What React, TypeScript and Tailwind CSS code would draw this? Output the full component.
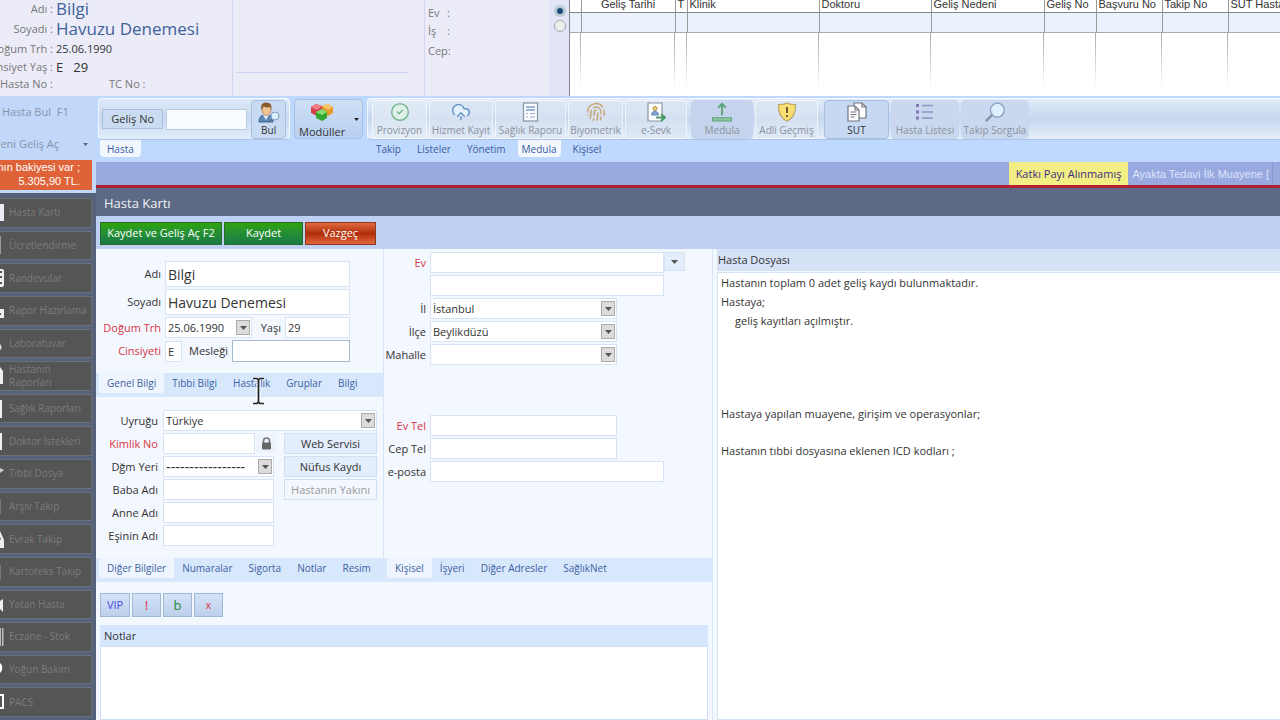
import React from "react";
import {
  CircleCheck,
  CloudUpload,
  Fingerprint,
} from "lucide-react";

const inputBase =
  "block border border-[#d5e3f3] bg-white px-[2px] leading-4 text-[#333] outline-none";

function Label({ id, text, red }: { id: string; text: string; red?: boolean }) {
  return (
    <label
      htmlFor={id}
      className={
        "whitespace-nowrap text-right text-[11px] leading-4 " +
        (red ? "text-[#d93644]" : "text-[#333]")
      }
    >
      {text}
    </label>
  );
}

function Combo({
  id,
  value,
  className,
  font = "text-[11px]",
}: {
  id: string;
  value: string;
  className: string;
  font?: string;
}) {
  return (
    <div className={"relative " + className}>
      <select id={id} className={inputBase + " h-[21px] w-full appearance-none " + font}>
        <option>{value}</option>
      </select>
      <span className="pointer-events-none absolute right-[2px] top-[3px] flex h-[15px] w-[14px] items-center justify-center border border-[#aaa] bg-[#dcdcdc]">
        <Arrow />
      </span>
    </div>
  );
}

function Arrow() {
  return (
    <svg width="7" height="4" viewBox="0 0 7 4">
      <path d="M0 0h7L3.5 4z" fill="#555" />
    </svg>
  );
}

function UserIcon() {
  return (
    <svg width="22" height="21" viewBox="0 0 22 21">
      <path d="M1 20c0-6 3-7 7-7s7 1 7 7z" fill="#5a87b8" stroke="#3f658f" />
      <path d="M5 13l3 5 3-5z" fill="#e8eef5" />
      <ellipse cx="8.500" cy="7.500" rx="4.500" ry="6" fill="#efc393" stroke="#a8763f" strokeWidth=".7" />
      <path d="M3.500 8C2 1.500 6 0 9 .7c4 0 5 3.300 4.300 7L12 5C9 6 7 5 5.500 4.500z" fill="#8a5a2b" />
      <path d="M14 17l-3 3" stroke="#5a6f88" strokeWidth="1.500" />
      <circle cx="17" cy="14" r="4" fill="#dcefff" stroke="#7f9fc0" />
    </svg>
  );
}

function CubesIcon() {
  return (
    <svg width="24" height="19" viewBox="0 0 24 19">
      <path d="M1 4l5-3 6 2v6l-5 4-6-3z" fill="#d4404a" />
      <path d="M1 4l5-3 6 2-5 4z" fill="#f07f86" />
      <path d="M12 3l6-2 5 3v6l-5 3-6-4z" fill="#e89a2c" />
      <path d="M12 3l6-2 5 3-5 3z" fill="#f8c56a" />
      <path d="M6 9l6-3 5 3v6l-5 3-6-3z" fill="#35a833" />
      <path d="M6 9l6-3 5 3-5 3z" fill="#86db72" />
    </svg>
  );
}

function ReportIcon() {
  return (
    <svg width="18" height="20" viewBox="0 0 18 20" fill="none">
      <rect x="1.500" y="1" width="14" height="18" fill="#fbfcff" stroke="#8d99a8" strokeWidth="1.300" />
      <path d="M4 5h9M4 8h9" stroke="#7d9bd0" strokeWidth="1.500" />
      <path d="M4 11.500h2M8 11.500h5M4 15h2M8 15h5" stroke="#9aaed2" strokeWidth="1.200" />
    </svg>
  );
}

function ReferralIcon() {
  return (
    <svg width="20" height="20" viewBox="0 0 20 20" fill="none">
      <path d="M2 1h14v18H2z" fill="#fff" stroke="#8b929b" strokeWidth="1.200" />
      <circle cx="9" cy="6.500" r="2" fill="#f1d477" stroke="#a9893e" />
      <path d="M5.500 13c0-5 7-5 7 0z" fill="#82a5d8" stroke="#6386bd" />
      <path d="M10 15.500h8M15 12l4 3.500-4 3.500" stroke="#4a9b6a" strokeWidth="2" />
    </svg>
  );
}

function UploadIcon() {
  return (
    <svg width="22" height="21" viewBox="0 0 22 21" fill="none">
      <path d="M11 14V2M7 6l4-4 4 4" stroke="#5ba57b" strokeWidth="2" />
      <rect x="1" y="16.500" width="20" height="3.500" fill="#8cc6a0" stroke="#5ba57b" />
    </svg>
  );
}

function ShieldIcon() {
  return (
    <svg width="20" height="20" viewBox="0 0 20 20" fill="none">
      <path d="M10 1c3 1.800 5.500 1.500 8.500 1.500C19 10 17 15.500 10 19.300 3 15.500 1 10 1.500 2.500 4.500 2.500 7 2.800 10 1z" fill="#f9df72" stroke="#b6a468" strokeWidth="1.200" />
      <path d="M10 5v6M10 13v2" stroke="#6b5a35" strokeWidth="2" />
    </svg>
  );
}

function DocsIcon() {
  return (
    <svg width="22" height="20" viewBox="0 0 22 20" fill="none" stroke="#70757d" strokeWidth="1.200">
      <path d="M8 1h8l4 4v11H8z" fill="#fff" />
      <path d="M16 1v4h4" />
      <path d="M2 4h7l4 4v11H2z" fill="#fff" />
      <path d="M9 4v4h4M4.500 10h6M4.500 12.500h6M4.500 15h4" />
    </svg>
  );
}

function ListIcon() {
  return (
    <svg width="20" height="20" viewBox="0 0 20 20" fill="none">
      <path d="M7 3.500h11M7 10h11M7 16h11" stroke="#8b98c5" strokeWidth="1.600" />
      <path d="M1 3.500h3M1 10h3M1 16h3" stroke="#8578b4" strokeWidth="3" />
    </svg>
  );
}

function MagnifierIcon() {
  return (
    <svg width="22" height="21" viewBox="0 0 22 21" fill="none">
      <path d="M8 13.500L1.500 20" stroke="#8592a5" strokeWidth="2.600" />
      <circle cx="13.500" cy="8.500" r="7.300" fill="#dcf0fd" stroke="#8ba3c4" strokeWidth="1.400" />
    </svg>
  );
}

const tools: {
  label: string;
  icon: React.ReactNode;
  box: string;
  look: string;
}[] = [
  { label: "Provizyon", icon: <CircleCheck size={22} strokeWidth={1.8} color="#79b894" fill="#dff0e6" />, box: "w-[55px]", look: "bg-[#e3ebf5]/70 border-white/60 text-[#8b929c]" },
  { label: "Hizmet Kayıt", icon: <CloudUpload size={22} strokeWidth={1.8} color="#6795c8" fill="#e4f1fc" />, box: "w-[64px]", look: "bg-[#dbe5f4]/70 border-white/60 text-[#8b929c]" },
  { label: "Sağlık Raporu", icon: <ReportIcon />, box: "w-[71px]", look: "bg-[#dbe5f4]/70 border-white/60 text-[#8b929c]" },
  { label: "Biyometrik", icon: <Fingerprint size={22} strokeWidth={1.8} color="#c9a878" />, box: "w-[55px]", look: "bg-[#dbe5f4]/70 border-white/60 text-[#8b929c]" },
  { label: "e-Sevk", icon: <ReferralIcon />, box: "w-[62px] mr-[2px]", look: "bg-[#dbe5f4]/70 border-white/60 text-[#8b929c]" },
  { label: "Medula", icon: <UploadIcon />, box: "w-[62px]", look: "bg-[#c5d4ec] border-[#c5d4ec] text-[#8b929c]" },
  { label: "Adli Geçmiş", icon: <ShieldIcon />, box: "w-[63px] mr-1", look: "bg-[#dbe5f4]/70 border-white/60 text-[#8b929c]" },
  { label: "SUT", icon: <DocsIcon />, box: "w-[65px]", look: "bg-[#c6d8f2] border-[#a5bfe2] text-[#333]" },
  { label: "Hasta Listesi", icon: <ListIcon />, box: "w-[68px]", look: "bg-[#c9d8ee] border-[#c9d8ee] text-[#8b929c]" },
  { label: "Takip Sorgula", icon: <MagnifierIcon />, box: "w-[68px]", look: "bg-[#c9d8ee] border-[#c9d8ee] text-[#8b929c]" },
];

const ribbonTabs = ["Takip", "Listeler", "Yönetim", "Medula", "Kişisel"];

const menu: { label: string; icon: React.ReactNode }[] = [
  { label: "Hasta Kartı", icon: <path d="M0 0h4v17H0z" fill="#e9ebf5" /> },
  { label: "Ücretlendirme", icon: <path d="M0 0h1v18H0z" fill="#999" /> },
  { label: "Randevular", icon: <path d="M0 0h2a2 2 0 0 1 2 2v14a2 2 0 0 1-2 2H0v-3h2v-2H0V9h2V7H0V4h2V2H0z" fill="#eee" /> },
  { label: "Rapor Hazırlama", icon: <path d="M0 7h4v9H0v-3h1v-2H0z" fill="#eee" /> },
  { label: "Laboratuvar", icon: <path d="M0 10c2 2 2 5 0 6z" fill="#ddd" /> },
  { label: "Hastanın Raporları", icon: <path d="M0 0l3 4v13H0z" fill="#eee" /> },
  { label: "Sağlık Raporları", icon: <path d="M0 0h2v18H0z" fill="#eee" /> },
  { label: "Doktor İstekleri", icon: <path d="M0 1h2v17H0z" fill="#eee" /> },
  { label: "Tıbbi Dosya", icon: <path d="M0 3l4 2-4 3z" fill="#ccc" /> },
  { label: "Arşiv Takip", icon: <path d="M0 2h1v15H0z" fill="#777" /> },
  { label: "Evrak Takip", icon: <path d="M0 1l4 9v8H0v-8l1-1-1-2z" fill="#eee" /> },
  { label: "Kartoteks Takip", icon: <path d="M0 2h1v15H0z" fill="#777" /> },
  { label: "Yatan Hasta", icon: <path d="M0 6l3-2v13l-3-3z" fill="#eee" /> },
  { label: "Eczane - Stok", icon: <path d="M0 0h1v18H0zM2 0h1.500v18H2z" fill="#bbb" /> },
  { label: "Yoğun Bakım", icon: <path d="M0 2c3 2 3 7 0 10z" fill="#fff" /> },
  { label: "PACS", icon: <path d="M0 1h4v15H0v-2h2V3H0z" fill="#fff" /> },
];

const columns = [
  { label: "", w: "w-[11px]" },
  { label: "Geliş Tarihi", w: "w-[94px]" },
  { label: "T", w: "w-[12px]" },
  { label: "Klinik", w: "w-[132px]" },
  { label: "Doktoru", w: "w-[112px]" },
  { label: "Geliş Nedeni", w: "w-[113px]" },
  { label: "Geliş No", w: "w-[52px]" },
  { label: "Başvuru No", w: "w-[66px]" },
  { label: "Takip No", w: "w-[66px]" },
  { label: "SUT Hasta", w: "" },
];

function Header() {
  return (
    <header className="flex h-24 shrink-0 overflow-hidden bg-[#ebecf8]">
      <dl className="grid w-[233px] shrink-0 grid-cols-[53px_1fr] grid-rows-[18px_22px_19px_17px_17px] items-center gap-x-[3px] border-r border-[#d3d6ee] text-[11px] text-[#777]">
        <dt className="flex justify-end whitespace-nowrap">Adı :</dt>
        <dd className="text-[17px] leading-4 text-[#3f629b]">Bilgi</dd>
        <dt className="flex justify-end whitespace-nowrap">Soyadı :</dt>
        <dd className="whitespace-nowrap text-[17px] leading-5 text-[#3f629b]">Havuzu Denemesi</dd>
        <dt className="flex justify-end whitespace-nowrap">Doğum Trh :</dt>
        <dd className="text-[11px] text-[#333]">25.06.1990</dd>
        <dt className="flex justify-end whitespace-nowrap">Cinsiyet Yaş :</dt>
        <dd className="flex gap-[10px] text-[13px] text-[#333]">
          <span>E</span>
          <span>29</span>
        </dd>
        <dt className="flex justify-end whitespace-nowrap">Hasta No :</dt>
        <dd className="pl-[53px]">TC No :</dd>
      </dl>
      <div className="w-[192px] shrink-0 border-r border-[#d3d6ee] pl-1 pr-[15px]">
        <div className="h-[73px] border-b border-[#cdd0f0]" />
      </div>
      <div className="flex w-[145px] shrink-0 justify-between border-r border-[#888]">
        <div className="grid content-start gap-y-[2px] pl-[3px] pt-[5px] text-[11px] leading-4 text-[#777]">
          <p className="grid grid-cols-[19px_1fr]"><span>Ev</span><span>:</span></p>
          <p className="grid grid-cols-[19px_1fr]"><span>İş</span><span>:</span></p>
          <p className="pt-[2px]">Cep:</p>
        </div>
        <div className="flex w-[19px] flex-col items-center gap-[3px] bg-[#e2e4f7] pt-[5px]">
          <input type="radio" name="phone" aria-label="Ev telefonu" defaultChecked className="size-3 appearance-none rounded-full border border-[#999] bg-white checked:border-[3px] checked:border-[#b9cbd8] checked:bg-[#1f4d77]" />
          <input type="radio" name="phone" aria-label="İş telefonu" className="size-3 appearance-none rounded-full border border-[#aaa] bg-[#eee] checked:border-[3px] checked:border-[#b9cbd8] checked:bg-[#1f4d77]" />
        </div>
      </div>
      <div className="flex min-w-0 flex-1 items-end overflow-hidden bg-white pb-2">
        <table className="w-full table-fixed border-collapse font-['Liberation_Sans',sans-serif] text-[11px] leading-3 text-[#333]">
          <thead>
            <tr className="h-5 border-b border-[#888]">
              {columns.map((c, i) => (
                <th key={c.label} className={c.w + " overflow-hidden whitespace-nowrap border-r border-[#999] px-[2px] pt-[3px] font-normal last:border-r-0 " + (i === 1 ? "text-center" : "text-left")}>
                  {c.label}
                </th>
              ))}
            </tr>
          </thead>
          <tbody>
            <tr className="h-5 border-b border-[#aaa] bg-[#ebf2fd]">
              {columns.map((c) => (
                <td key={c.label} className="border-r border-[#999] last:border-r-0" />
              ))}
            </tr>
            <tr className="h-[55px]">
              {columns.map((c) => (
                <td key={c.label} className="p-0 last:hidden">
                  <div className="ml-auto h-[55px] w-px bg-linear-to-b from-[#aaa] to-white" />
                </td>
              ))}
            </tr>
          </tbody>
        </table>
      </div>
    </header>
  );
}

function Sidebar() {
  return (
    <aside className="flex w-24 shrink-0 flex-col bg-[#c1d8fb]">
      <button type="button" className="h-[33px] w-full whitespace-nowrap pl-[2px] text-left text-[11px] text-[#8795ab]">
        Hasta Bul &nbsp;F1
      </button>
      <button type="button" className="flex h-[31px] w-full items-center justify-between pr-2 text-[11px] text-[#8795ab]">
        <span className="flex w-[59px] justify-end whitespace-nowrap">Yeni Geliş Aç</span>
        <svg width="5" height="3" viewBox="0 0 5 3"><path d="M0 0h5L2.500 3z" fill="#667" /></svg>
      </button>
      <div className="flex h-[30px] w-[92px] flex-col items-end overflow-hidden bg-[#e06238] pr-3 font-['Liberation_Sans',sans-serif] text-[11px] leading-[14px] text-white">
        <span className="whitespace-nowrap">Hastanın bakiyesi var ;</span>
        <span>5.305,90 TL.</span>
      </div>
      <nav className="mt-[3px] flex flex-1 flex-col gap-[3px] bg-[#56627a] pb-[3px] pr-1 pt-[5px]">
        {menu.map((m) => (
          <button key={m.label} type="button" className="flex min-h-7 flex-1 items-center gap-[5px] border border-l-0 border-[#6b6f78] bg-[#555] text-left text-[10px] leading-[13px] text-[#7c7c7c]">
            <svg width="4" height="18" viewBox="0 0 4 18" className="shrink-0">{m.icon}</svg>
            <span className={m.label === "Hastanın Raporları" ? "w-14" : "whitespace-nowrap"}>{m.label}</span>
          </button>
        ))}
      </nav>
    </aside>
  );
}

function Ribbon() {
  return (
    <div className="flex h-[66px] shrink-0 gap-1 overflow-hidden bg-[#bfd8fd] pl-[2px] pt-[2px]">
      <section className="w-[192px] shrink-0">
        <div className="flex h-[42px] items-center rounded-sm border border-white/70 border-b-[#a9c4e6] bg-linear-to-b from-[#dde9f8] via-[#c9daf0] to-[#e2edfb] px-[3px]">
          <button type="button" className="h-5 w-[62px] border border-[#a9bfdd] bg-[#cbdcf2] text-[11px] leading-4 text-[#333]">Geliş No</button>
          <input aria-label="Geliş No" className="ml-[3px] h-[21px] w-[81px] border border-[#bccde3] bg-[#f8fbff] px-1 text-[11px]" />
          <button type="button" className="ml-1 flex h-[39px] w-[35px] flex-col items-center justify-between rounded-sm border border-[#a9c0e0] bg-[#c9dbf3] pt-px text-[10px] leading-[15px] text-[#333]">
            <UserIcon />
            Bul
          </button>
        </div>
        <button type="button" className="ml-[2px] block h-[17px] rounded-b-sm bg-[#f2f7fe] px-[7px] text-[10px] leading-4 text-[#3b5ba0]">Hasta</button>
      </section>
      <button type="button" className="mt-px flex h-10 w-[69px] shrink-0 items-center justify-between rounded-sm border border-[#a5c0e6] bg-linear-to-b from-[#cfe0f6] to-[#b7cff0] pl-1 pr-[3px] text-[11px] text-[#333]">
        <span className="flex flex-col items-center gap-[2px] pt-1 leading-4">
          <CubesIcon />
          Modüller
        </span>
        <svg width="5" height="3" viewBox="0 0 5 3"><path d="M0 0h5L2.500 3z" fill="#222" /></svg>
      </button>
      <section className="min-w-0 flex-1">
        <div className="flex h-[42px] items-center gap-[2px] overflow-hidden rounded-l-sm border border-r-0 border-white/70 border-b-[#a9c4e6] bg-linear-to-b from-[#e2ecfa] via-[#c6d7ee] to-[#e6effb] pl-1">
          {tools.map((t) => (
            <button key={t.label} type="button" className={"flex h-[39px] shrink-0 flex-col items-center justify-between rounded-sm border pt-px text-[10px] leading-4 " + t.box + " " + t.look}>
              {t.icon}
              <span className="whitespace-nowrap">{t.label}</span>
            </button>
          ))}
        </div>
        <div className="flex gap-2 pl-[5px]">
          {ribbonTabs.map((t) => (
            <button key={t} type="button" className={"h-[17px] rounded-b-sm px-1 text-[10px] leading-4 text-[#3b5ba0] " + (t === "Medula" ? "bg-[#f2f7fe]" : "")}>
              {t}
            </button>
          ))}
        </div>
      </section>
    </div>
  );
}

function Cursor() {
  return (
    <svg className="pointer-events-none absolute left-[27px] top-1 z-10" width="13" height="28" viewBox="0 0 13 28" fill="none">
      <path d="M1 1.500h4.500v24H1M12 1.500H7.500v24H12M6.500 2v24" stroke="#fff" strokeWidth="3" opacity=".5" />
      <path d="M1 1.500h4l1.500 1.500L8 1.500h4M1 26.500h4l1.500-1.500L8 26.500h4M6.500 3v22" stroke="#222" strokeWidth="1.700" />
    </svg>
  );
}

function Tabs({ items }: { items: string[] }) {
  return (
    <div className="flex h-6 items-start bg-[#d7e8fd] pl-[3px] text-[10px] leading-[18px] text-[#3f619f]">
      {items.map((t, i) => (
        <button key={t} type="button" className={"relative h-5 whitespace-nowrap px-2 " + (i === 0 ? "bg-[#eff5fe]" : "")}>
          {t}
          {t === "Hastalık" && <Cursor />}
        </button>
      ))}
    </div>
  );
}

const sideButton = "ml-[15px] h-[21px] w-[93px] border border-[#d0dff2] text-[11px] leading-4";

function PersonPanel() {
  const pair = "col-span-2 col-start-1 grid grid-cols-[57px_111px] items-center gap-x-[5px]";
  const name = "h-[26px] border border-[#d5e3f3] bg-white px-[2px] text-[14px] text-[#333]";
  return (
    <section className="flex w-[288px] shrink-0 flex-col border-r border-[#d5e4f6]">
      <div className="grid h-[124px] content-start gap-[2px] pl-[5px] pt-3">
        <div className="grid grid-cols-[60px_185px] items-center gap-x-1">
          <Label id="adi" text="Adı" />
          <input id="adi" defaultValue="Bilgi" className={name} />
        </div>
        <div className="grid grid-cols-[60px_185px] items-center gap-x-1">
          <Label id="soyadi" text="Soyadı" />
          <input id="soyadi" defaultValue="Havuzu Denemesi" className={name} />
        </div>
        <div className="grid grid-cols-[60px_87px_25px_65px] items-center gap-x-1">
          <Label id="dogum" text="Doğum Trh" red />
          <Combo id="dogum" value="25.06.1990" className="w-full" />
          <Label id="yas" text="Yaşı" />
          <input id="yas" defaultValue="29" className={inputBase + " h-[21px] w-full text-[11px]"} />
        </div>
        <div className="grid grid-cols-[60px_17px_42px_118px] items-center gap-x-1">
          <Label id="cins" text="Cinsiyeti" red />
          <input id="cins" defaultValue="E" className={inputBase + " h-[21px] w-full text-[11px]"} />
          <Label id="meslek" text="Mesleği" />
          <input id="meslek" className="h-[22px] w-full border border-[#a9b9cd] bg-white px-[2px] text-[11px]" />
        </div>
      </div>
      <Tabs items={["Genel Bilgi", "Tıbbi Bilgi", "Hastalık", "Gruplar", "Bilgi"]} />
      <div className="grid h-[161px] grid-cols-[57px_111px_108px] content-start gap-y-[2px] pl-[5px] pt-[13px]">
        <div className="col-span-3 grid grid-cols-[57px_214px] items-center gap-x-[5px]">
          <Label id="uyruk" text="Uyruğu" />
          <Combo id="uyruk" value="Türkiye" className="w-full" />
        </div>
        <div className="col-span-2 grid grid-cols-[57px_92px_19px] items-center">
          <Label id="kimlik" text="Kimlik No" red />
          <input id="kimlik" className={inputBase + " ml-[5px] h-[21px] w-full text-[11px]"} />
          <button type="button" aria-label="Kilitle" className="ml-[6px] flex h-[19px] w-5 items-center justify-center bg-[#edf3fc]">
            <svg width="11" height="13" viewBox="0 0 11 13"><path d="M2.500 6V4a3 3 0 0 1 6 0v2" fill="none" stroke="#777" strokeWidth="1.600" /><rect x="1" y="5.500" width="9" height="7" rx="1" fill="#666" /></svg>
          </button>
        </div>
        <button type="button" className={sideButton + " bg-[#e3edfb] text-[#333]"}>Web Servisi</button>
        <div className={pair}>
          <Label id="dgm" text="Dğm Yeri" />
          <Combo id="dgm" value="-----------------" className="w-full" font="font-['Liberation_Sans',sans-serif] text-[14px]" />
        </div>
        <button type="button" className={sideButton + " bg-[#e3edfb] text-[#333]"}>Nüfus Kaydı</button>
        <div className={pair}>
          <Label id="baba" text="Baba Adı" />
          <input id="baba" className={inputBase + " h-[21px] w-full text-[11px]"} />
        </div>
        <button type="button" className={sideButton + " bg-[#f4f8fe] text-[#999]"}>Hastanın Yakını</button>
        <div className={pair}>
          <Label id="anne" text="Anne Adı" />
          <input id="anne" className={inputBase + " h-[21px] w-full text-[11px]"} />
        </div>
        <div className={pair}>
          <Label id="esi" text="Eşinin Adı" />
          <input id="esi" className={inputBase + " h-[21px] w-full text-[11px]"} />
        </div>
      </div>
      <Tabs items={["Diğer Bilgiler", "Numaralar", "Sigorta", "Notlar", "Resim"]} />
    </section>
  );
}

function AddressPanel() {
  const row = "grid grid-cols-[42px_1fr] items-center gap-x-1";
  const wide = inputBase + " h-[21px] w-[234px] text-[11px]";
  const narrow = inputBase + " h-[21px] w-[187px] text-[11px]";
  return (
    <section className="flex min-w-0 flex-1 flex-col">
      <div className="grid h-[309px] content-start gap-y-[2px] pt-[3px]">
        <div className={row}>
          <Label id="ev" text="Ev" red />
          <div className="flex">
            <input id="ev" className={wide} />
            <button type="button" aria-label="Adres seç" className="flex h-[19px] w-[21px] items-center justify-center border border-[#d5e3f3] bg-[#e3edfb]"><Arrow /></button>
          </div>
        </div>
        <div className={row}>
          <span />
          <input aria-label="Ev adresi devamı" className={wide} />
        </div>
        <div className={row}><Label id="il" text="İl" /><Combo id="il" value="İstanbul" className="w-[187px]" /></div>
        <div className={row}><Label id="ilce" text="İlçe" /><Combo id="ilce" value="Beylikdüzü" className="w-[187px]" /></div>
        <div className={row}><Label id="mah" text="Mahalle" /><Combo id="mah" value="" className="w-[187px]" /></div>
        <div className={row + " mt-12"}><Label id="evtel" text="Ev Tel" red /><input id="evtel" className={narrow} /></div>
        <div className={row}><Label id="cep" text="Cep Tel" /><input id="cep" className={narrow} /></div>
        <div className={row}><Label id="eposta" text="e-posta" /><input id="eposta" className={wide} /></div>
      </div>
      <Tabs items={["Kişisel", "İşyeri", "Diğer Adresler", "SağlıkNet"]} />
    </section>
  );
}

const flag = "h-6 border border-[#9fb8da] bg-linear-to-b from-[#d3e2f6] to-[#bdd0ec] leading-5";

export default function App() {
  return (
    <div className="flex min-h-screen flex-col overflow-hidden bg-[#f3f7fe] font-['Open_Sans',sans-serif]">
      <Header />
      <div className="flex flex-1">
        <Sidebar />
        <main className="flex min-w-0 flex-1 flex-col">
          <Ribbon />
          <div className="flex h-[26px] shrink-0 items-stretch justify-end border-b-[3px] border-[#b51f36] bg-[#98a9e0] text-[11px] leading-6">
            <span className="whitespace-nowrap bg-[#f2ee84] px-[7px] font-medium text-[#3d2f80]">Katkı Payı Alınmamış</span>
            <span className="mr-[7px] whitespace-nowrap border-r border-[#8598d0] pl-1 pr-[3px] font-['Liberation_Sans',sans-serif] text-[#dde4fa]">Ayakta Tedavi İlk Muayene [</span>
          </div>
          <h1 className="h-7 shrink-0 bg-[#5d6a85] pl-2 text-[13px] leading-[30px] text-[#f0f2f6]">Hasta Kartı</h1>
          <div className="flex h-[33px] shrink-0 gap-[2px] bg-[#bed0f3] pl-1 pt-[6px] text-[11px] text-white">
            <button type="button" className="h-[23px] w-[122px] border border-[#2d6b2c] bg-linear-to-b from-[#2fa300] to-[#1a7a45]">Kaydet ve Geliş Aç F2</button>
            <button type="button" className="h-[23px] w-[79px] border border-[#2d6b2c] bg-linear-to-b from-[#2fa300] to-[#1a7a45]">Kaydet</button>
            <button type="button" className="h-[23px] w-[71px] border border-[#8f3a25] bg-linear-to-b from-[#e06a3c] via-[#b02c08] to-[#e0683a]">Vazgeç</button>
          </div>
          <div className="flex flex-1">
            <div className="flex w-[617px] shrink-0 flex-col border-r border-[#d9e6f6]">
              <div className="flex">
                <PersonPanel />
                <AddressPanel />
              </div>
              <div className="flex gap-[2px] pl-1 pt-[11px]">
                <button type="button" className={flag + " w-[30px] text-[11px] text-[#4b4be8]"}>VIP</button>
                <button type="button" className={flag + " w-[29px] text-[13px] text-[#e0303a]"}>!</button>
                <button type="button" className={flag + " w-[29px] text-[13px] text-[#26893a]"}>b</button>
                <button type="button" className={flag + " w-[29px] text-[11px] text-[#d33a48]"}>x</button>
              </div>
              <div className="mx-1 mt-2 flex flex-1 flex-col">
                <label htmlFor="notlar" className="bg-[#d6e7fd] pl-1 text-[11px] leading-[21px] text-[#333]">Notlar</label>
                <textarea id="notlar" className="min-h-16 flex-1 resize-none border border-[#cfe0f3] bg-white p-1 text-[11px]" />
              </div>
            </div>
            <section className="flex min-w-0 flex-1 flex-col pl-1">
              <h2 className="bg-[#d5e1f5] pl-px text-[11px] leading-[22px] text-[#333]">Hasta Dosyası</h2>
              <div className="mt-px flex flex-1 flex-col border border-r-0 border-[#d5e4f4] bg-white pl-[3px] text-[11px] leading-[19px] text-[#333]">
                <p>Hastanın toplam 0 adet geliş kaydı bulunmaktadır.</p>
                <p>Hastaya;</p>
                <p className="pl-[14px]">geliş kayıtları açılmıştır.</p>
                <p className="mt-[74px]">Hastaya yapılan muayene, girişim ve operasyonlar;</p>
                <p className="mt-[18px]">Hastanın tıbbi dosyasına eklenen ICD kodları ;</p>
              </div>
            </section>
          </div>
        </main>
      </div>
    </div>
  );
}
